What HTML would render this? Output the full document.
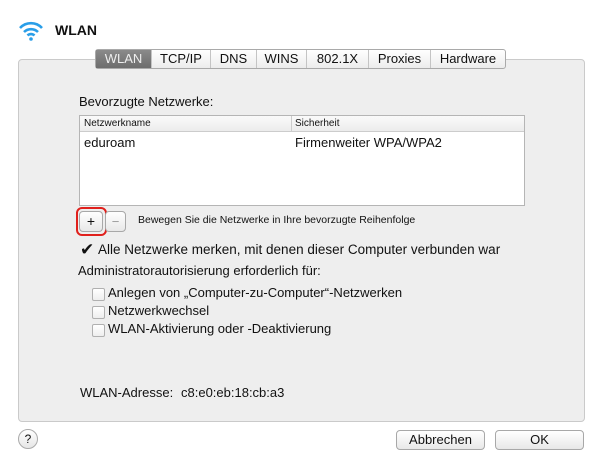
<!DOCTYPE html>
<html><head><meta charset="utf-8"><style>
body{margin:0;width:600px;height:467px;background:#fff;font-family:"Liberation Sans","DejaVu Sans",sans-serif;color:#111;position:relative;overflow:hidden}
.a{position:absolute;white-space:nowrap}
.panel{position:absolute;left:18px;top:59px;width:565px;height:361px;background:#eeeeee;border:1px solid #cacaca;border-radius:4px}
.tabs{position:absolute;left:95px;top:49px;height:18px;display:flex;border:1px solid #a9a9a9;border-radius:3px;background:linear-gradient(#fff,#ececec);font-size:13px}
.tabs div{border-right:1px solid #c4c4c4;text-align:center;line-height:18px}
.tabs div:last-child{border-right:none}
.tabs .sel{background:linear-gradient(#8a8a8a,#6d6d6d);color:#eee}
.list{position:absolute;left:79px;top:115px;width:444px;height:89px;background:#fff;border:1px solid #b5b5b5}
.hdr{height:15px;border-bottom:1px solid #ccc;background:linear-gradient(#fafafa,#ececec);font-size:10px;line-height:15px}
.cb{position:absolute;width:11px;height:11px;border:1px solid #b0b0b0;border-radius:2px;background:linear-gradient(#fff,#eee)}
.btn{position:absolute;border:1px solid #a8a8a8;border-radius:4px;background:linear-gradient(#fff,#e8e8e8);text-align:center;font-size:13px;line-height:17px}
</style></head><body>
<svg class="a" style="left:18px;top:20px" width="26" height="24" viewBox="0 0 26 24">
<path d="M2 8 A15 15 0 0 1 24 8" stroke="#2a9ee8" stroke-width="2.6" fill="none"/>
<path d="M6 12 A10 10 0 0 1 20 12" stroke="#2a9ee8" stroke-width="2.6" fill="none"/>
<path d="M9.5 15.5 A5 5 0 0 1 16.5 15.5" stroke="#2a9ee8" stroke-width="2.6" fill="none"/>
<circle cx="13" cy="19" r="1.8" fill="#2a9ee8"/></svg>
<div class="a" style="left:55px;top:22px;font-size:14px;font-weight:bold">WLAN</div>
<div class="panel"></div>
<div class="tabs">
<div class="sel" style="width:55px">WLAN</div><div style="width:58px">TCP/IP</div><div style="width:45px">DNS</div><div style="width:49px">WINS</div><div style="width:61px">802.1X</div><div style="width:61px">Proxies</div><div style="width:74px">Hardware</div></div>
<div class="a" style="left:79px;top:94px;font-size:13px">Bevorzugte Netzwerke:</div>
<div class="list"><div class="hdr"><span style="padding-left:4px">Netzwerkname</span><span style="position:absolute;left:211px;border-left:1px solid #ccc;padding-left:3px">Sicherheit</span></div>
<div style="font-size:13px;line-height:22px;position:relative"><span style="padding-left:4px">eduroam</span><span style="position:absolute;left:215px">Firmenweiter WPA/WPA2</span></div></div>
<div class="btn" style="left:79px;top:211px;width:22px;height:19px;line-height:19px;font-size:14px">+</div>
<div class="a" style="left:76px;top:207px;width:27px;height:25px;border:2px solid #e0201c;border-radius:6px"></div>
<div class="btn" style="left:105px;top:211px;width:19px;height:19px;line-height:19px;color:#999">−</div>
<div class="a" style="left:138px;top:214px;font-size:10.5px">Bewegen Sie die Netzwerke in Ihre bevorzugte Reihenfolge</div>
<div class="a" style="left:80px;top:240px;font-size:17px">✔</div>
<div class="a" style="left:98px;top:242px;font-size:13.5px">Alle Netzwerke merken, mit denen dieser Computer verbunden war</div>
<div class="a" style="left:78px;top:263px;font-size:13px">Administratorautorisierung erforderlich für:</div>
<div class="cb" style="left:92px;top:288px"></div><div class="a" style="left:108px;top:285px;font-size:13px">Anlegen von „Computer-zu-Computer“-Netzwerken</div>
<div class="cb" style="left:92px;top:306px"></div><div class="a" style="left:108px;top:303px;font-size:13px">Netzwerkwechsel</div>
<div class="cb" style="left:92px;top:324px"></div><div class="a" style="left:108px;top:321px;font-size:13px">WLAN-Aktivierung oder -Deaktivierung</div>
<div class="a" style="left:80px;top:385px;font-size:13px">WLAN-Adresse:</div>
<div class="a" style="left:181px;top:385px;font-size:13px">c8:e0:eb:18:cb:a3</div>
<div class="a" style="left:18px;top:429px;width:18px;height:18px;border:1px solid #aaa;border-radius:50%;background:linear-gradient(#fff,#e6e6e6);text-align:center;font-size:12px;line-height:18px">?</div>
<div class="btn" style="left:396px;top:430px;width:87px;height:18px">Abbrechen</div>
<div class="btn" style="left:495px;top:430px;width:87px;height:18px">OK</div>
</body></html>
